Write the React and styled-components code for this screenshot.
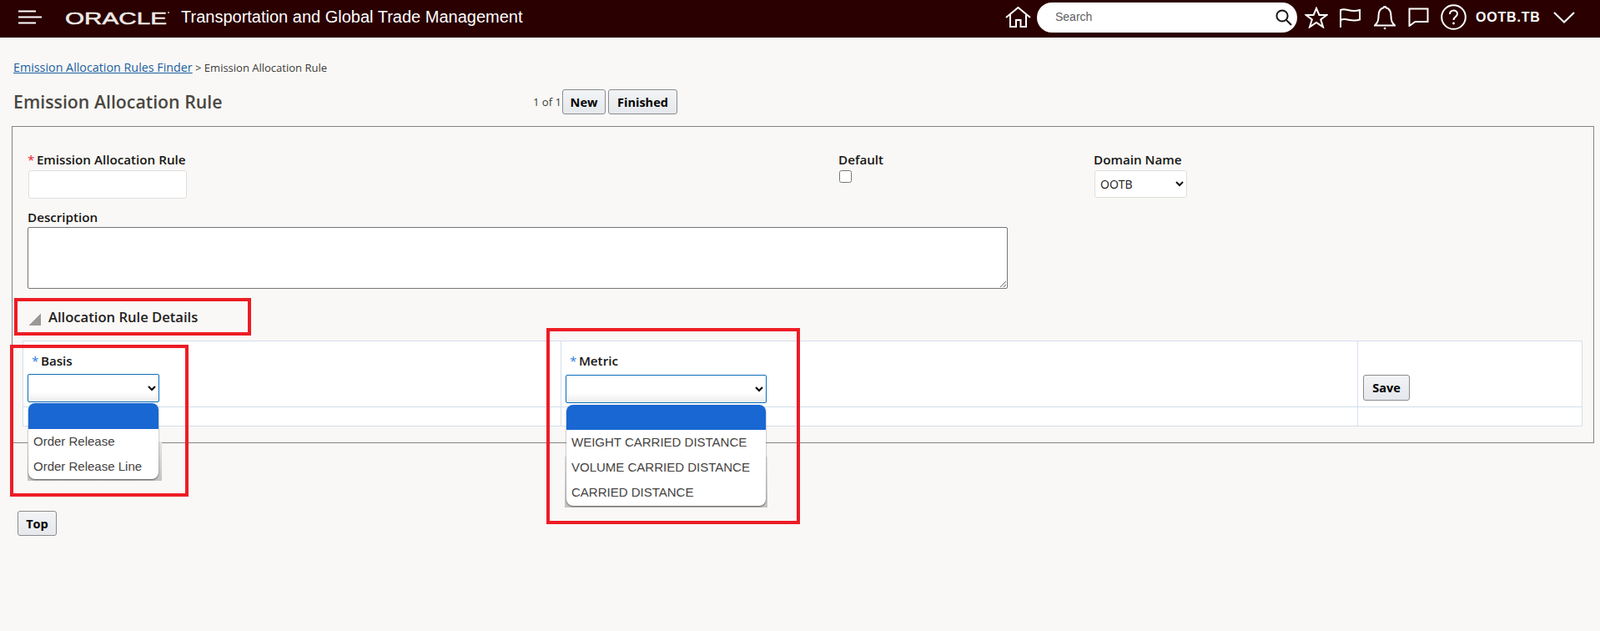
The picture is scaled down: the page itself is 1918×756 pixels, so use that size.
import React from 'react';
import styled, { createGlobalStyle } from 'styled-components';

const GlobalStyle = createGlobalStyle`
  html, body {
    margin: 0;
    padding: 0;
    background: #f9f8f6;
    font-family: "Open Sans", "Noto Sans", sans-serif;
    color: #161513;
  }
  * { box-sizing: border-box; }
`;

const Header = styled.header`
  height: 45px;
  background: #2a0000;
  display: flex;
  align-items: center;
  padding: 0 30px 4px 22px;
  color: #fff;
`;

const AppTitle = styled.div`
  margin-left: 11px;
  font-family: "Liberation Sans", Arial, sans-serif;
  font-size: 20px;
  white-space: nowrap;
`;

const HeaderRight = styled.div`
  margin-left: auto;
  display: flex;
  align-items: center;
`;

const HeaderIcon = styled.svg`
  display: block;
  flex: none;
  margin-left: ${(p) => p.$ml || 0}px;
  fill: none;
  stroke: #fff;
  stroke-width: 2;
`;

const LogoMark = styled.svg`
  display: block;
  flex: none;
  margin-left: 28px;
`;

const SearchPill = styled.div`
  margin-left: 7px;
  width: 312px;
  height: 36px;
  border-radius: 18px;
  background: #fff;
  display: flex;
  align-items: center;
  padding: 0 6px 0 22px;
`;

const SearchInput = styled.input`
  flex: 1;
  min-width: 0;
  height: 20px;
  margin-bottom: 2px;
  border: 0;
  outline: 0;
  padding: 0;
  background: transparent;
  font-family: "Liberation Sans", Arial, sans-serif;
  font-size: 14px;
  &::placeholder { color: #5f5f5f; opacity: 1; }
`;

const UserName = styled.div`
  margin-left: 11px;
  width: 79px;
  font-family: "Liberation Sans", Arial, sans-serif;
  font-weight: 700;
  font-size: 16px;
  letter-spacing: 0.8px;
  white-space: nowrap;
`;

const Main = styled.main`
  padding: 26px 7px 0 14px;
`;

const Breadcrumb = styled.div`
  padding-left: 2px;
  height: 20px;
  line-height: 20px;
  font-size: 13px;
  color: #3d3a37;
  white-space: nowrap;
`;

const CrumbLink = styled.a`
  color: #1b5f9e;
  text-decoration: underline;
  font-size: 14.3px;
`;

const TitleRow = styled.div`
  margin-top: 16px;
  height: 30px;
  padding-left: 2px;
  display: flex;
  align-items: center;
`;

const PageTitle = styled.h1`
  width: 623px;
  margin: 0 0 2px;
  font-size: 21.3px;
  font-weight: 600;
  color: #4a4742;
  white-space: nowrap;
`;

const Pager = styled.span`
  width: 35px;
  font-size: 13px;
  color: #3d3a37;
  white-space: nowrap;
`;

const Button = styled.button`
  height: ${(p) => p.$h || 30}px;
  width: ${(p) => p.$w}px;
  margin-left: ${(p) => p.$ml || 0}px;
  padding: 0;
  border: 1px solid #8c8c8c;
  border-radius: 3px;
  background: linear-gradient(#f2f4f6, #e5e8ec);
  font-family: "Open Sans", sans-serif;
  font-size: 14.5px;
  font-weight: 700;
  color: #000;
`;

const Panel = styled.section`
  margin-top: 14px;
  height: 380px;
  border: 1px solid #848484;
  padding: 31px 13px 18px 0;
`;

const TopFields = styled.div`
  padding-left: 18px;
  display: grid;
  grid-template-columns: 972px 306px auto;
`;

const Field = styled.div`
  display: flex;
  flex-direction: column;
  align-items: flex-start;
`;

const Label = styled.label`
  display: block;
  height: 20px;
  line-height: ${(p) => p.$lh || 17}px;
  font-size: 15.2px;
  font-weight: 600;
  color: #161513;
  white-space: nowrap;
`;

const Star = styled.span`
  color: ${(p) => (p.$blue ? '#2a7de1' : '#e8202a')};
  margin-right: 2.5px;
  font-weight: 400;
`;

const TextInput = styled.input`
  width: 190px;
  height: 34px;
  margin: 1px 0 0 1px;
  border: 1px solid #dedede;
  border-radius: 3px;
  background: #fff;
`;

const Checkbox = styled.input`
  width: 15px;
  height: 15px;
  margin: 1px 0 0 1px;
`;

const DomainSelect = styled.select`
  width: 111px;
  height: 33px;
  margin: 1px 0 0 1px;
  padding-left: 2px;
  border: 1px solid #dedede;
  border-radius: 3px;
  background: #fff;
  font-family: "Open Sans", sans-serif;
  font-size: 14px;
  color: #161513;
`;

const DescriptionField = styled.div`
  margin: 12px 0 0 18px;
`;

const DescriptionArea = styled.textarea`
  display: block;
  width: 1175px;
  height: 74px;
  margin-top: 2px;
  border: 1px solid #767676;
  border-radius: 2px;
  background: #fff;
`;

const SectionBox = styled.div`
  margin: 11px 0 0 2px;
  width: 284px;
  height: 45px;
  border: 4px solid #ed1c24;
  display: flex;
  align-items: center;
  padding-left: 14px;
`;

const SectionTriangle = styled.span`
  width: 14px;
  height: 14px;
  margin-top: 6px;
  background: linear-gradient(135deg, transparent 50%, #999 50%);
`;

const SectionTitle = styled.h2`
  margin: 0 0 0 9px;
  font-size: 16.6px;
  font-weight: 600;
  color: #24211e;
  white-space: nowrap;
`;

const DetailsTable = styled.div`
  margin: 6px 0 0 12px;
  height: 103px;
  display: grid;
  grid-template-columns: 644px 955px 1fr;
  grid-template-rows: 78px 1fr;
  border: 1px solid #d2dfea;
  background: #fff;
`;

const Cell = styled.div`
  position: relative;
  padding: ${(p) => p.$pad || '0'};
  border-left: ${(p) => (p.$first ? '0' : '1px solid #d2dfea')};
  border-top: ${(p) => (p.$lower ? '1px solid #d2dfea' : '0')};
`;

const CellLabel = styled(Label)`
  padding-left: 5px;
  margin-top: 14px;
`;

const SelectWrap = styled.div`
  position: relative;
  width: ${(p) => p.$w}px;
  margin-top: ${(p) => p.$mt || 0}px;
`;

const RuleSelect = styled.select`
  display: block;
  width: 100%;
  height: 34px;
  border: 1px solid #0a6ebd;
  border-radius: 2px;
  background: linear-gradient(#fff 65%, #ececec);
`;

const DropShade = styled.div`
  position: absolute;
  z-index: 3;
  left: ${(p) => p.$left}px;
  top: ${(p) => p.$top}px;
  width: ${(p) => p.$w}px;
  height: ${(p) => p.$h}px;
  padding: 0 ${(p) => p.$right}px 2px ${(p) => p.$pl}px;
  background: linear-gradient(transparent 50%, #e4e4e4 50%, #c4c4c4);
`;

const DropList = styled.ul`
  list-style: none;
  margin: 0;
  padding: 0;
  height: 100%;
  overflow: hidden;
  background: #fff;
  border-radius: 8px;
  box-shadow: 0 1px 2px rgba(0, 0, 0, 0.55);
`;

const DropOption = styled.li`
  height: ${(p) => p.$h || 30}px;
  line-height: 30px;
  padding-left: 6px;
  font-family: "Liberation Sans", Arial, sans-serif;
  font-size: 15px;
  color: #45423f;
  white-space: nowrap;
  background: ${(p) => (p.$selected ? '#1967d2' : 'transparent')};
`;

const Callout = styled.div`
  position: absolute;
  z-index: 4;
  left: ${(p) => p.$left}px;
  top: ${(p) => p.$top}px;
  width: ${(p) => p.$w}px;
  height: ${(p) => p.$h}px;
  border: 4px solid #ed1c24;
  pointer-events: none;
`;

const TopLink = styled.div`
  margin: 81px 0 0 7px;
`;

function Hamburger() {
  return (
    <HeaderIcon width="28" height="17" viewBox="0 0 28 17">
      <path d="M0 1.5h21M0 8.5h28M0 15.5h21" />
    </HeaderIcon>
  );
}

function OracleLogo() {
  return (
    <LogoMark width="128" height="26" viewBox="0 0 128 26">
      <text
        x="0"
        y="20.5"
        fill="#eee9e6"
        stroke="#eee9e6"
        strokeWidth="0.5"
        fontFamily="Liberation Sans, Arial, sans-serif"
        fontSize="21"
        textLength="122"
        lengthAdjust="spacingAndGlyphs"
      >
        ORACLE
      </text>
      <circle cx="124" cy="7" r="1" fill="#c9c4c2" />
    </LogoMark>
  );
}

function Dropdown({ top, left, width, height, right, paddingLeft, blue, options }) {
  return (
    <DropShade $top={top} $left={left} $w={width} $h={height} $right={right} $pl={paddingLeft}>
      <DropList>
        <DropOption $selected $h={blue} />
        {options.map((o) => (
          <DropOption key={o}>{o}</DropOption>
        ))}
      </DropList>
    </DropShade>
  );
}

export default function App() {
  return (
    <>
      <GlobalStyle />
      <Header>
        <Hamburger />
        <OracleLogo />
        <AppTitle>Transportation and Global Trade Management</AppTitle>
        <HeaderRight>
          <HeaderIcon width="31" height="25" viewBox="0 0 31 25">
            <path d="M1 13 15.5 1 30 13M6 9.5V24h7v-8h5.5v8H25V9.5" />
          </HeaderIcon>
          <SearchPill>
            <SearchInput placeholder="Search" />
            <HeaderIcon width="20" height="20" viewBox="0 0 20 20" style={{ stroke: '#161513' }}>
              <circle cx="8" cy="8" r="6.6" />
              <path d="m13 13 6 6" />
            </HeaderIcon>
          </SearchPill>
          <HeaderIcon $ml={9} width="28" height="26" viewBox="0 0 28 26">
            <path d="m14 2 3.4 8h9l-7.2 5.4 2.8 9L14 19l-8 5.4 2.8-9L1.6 10h9z" />
          </HeaderIcon>
          <HeaderIcon $ml={14} width="25" height="24" viewBox="0 0 25 24">
            <path d="M1 24V3c7-3 11 3.500 23 0v11.500C13 18 8 11.500 1 15" />
          </HeaderIcon>
          <HeaderIcon $ml={16} width="26" height="30" viewBox="0 0 26 30">
            <path d="M1 24.500c3-3 4.500-5 4.500-11C5.500 7 8.500 4 11.500 3.300 11.500 1.500 14.500 1.500 14.500 3.300 17.500 4 20.500 7 20.500 13.500c0 6 1.500 8 4.500 11z" />
            <circle cx="13" cy="28" r="1.300" fill="#fff" stroke="none" />
          </HeaderIcon>
          <HeaderIcon $ml={15} width="25" height="23" viewBox="0 0 25 23">
            <path d="M1.500 1.500h22v15.500H8.500l-7 5z" />
          </HeaderIcon>
          <HeaderIcon $ml={14} width="31" height="31" viewBox="0 0 31 31">
            <circle cx="15.500" cy="15.500" r="14.300" />
            <path d="M11 12c0-6 9-6 9-.5 0 3.500-4.500 3.500-4.500 7.500" />
            <circle cx="15.500" cy="23" r="1.400" fill="#fff" stroke="none" />
          </HeaderIcon>
          <UserName>OOTB.TB</UserName>
          <HeaderIcon $ml={14} width="26" height="14" viewBox="0 0 26 14">
            <path d="m1 1 12 11.500L25 1" />
          </HeaderIcon>
        </HeaderRight>
      </Header>

      <Main>
        <Breadcrumb>
          <CrumbLink href="#">Emission Allocation Rules Finder</CrumbLink> &gt; Emission Allocation Rule
        </Breadcrumb>
        <TitleRow>
          <PageTitle>Emission Allocation Rule</PageTitle>
          <Pager>1 of 1</Pager>
          <Button $w={52}>New</Button>
          <Button $w={83} $ml={3}>Finished</Button>
        </TitleRow>

        <Panel>
          <TopFields>
            <Field>
              <Label><Star>*</Star>Emission Allocation Rule</Label>
              <TextInput />
            </Field>
            <Field>
              <Label>Default</Label>
              <Checkbox type="checkbox" />
            </Field>
            <Field>
              <Label>Domain Name</Label>
              <DomainSelect defaultValue="OOTB">
                <option>OOTB</option>
              </DomainSelect>
            </Field>
          </TopFields>
          <DescriptionField>
            <Label $lh={21}>Description</Label>
            <DescriptionArea />
          </DescriptionField>

          <SectionBox>
            <SectionTriangle />
            <SectionTitle>Allocation Rule Details</SectionTitle>
          </SectionBox>

          <DetailsTable>
            <Cell $first $pad="0 0 0 5px">
              <CellLabel as="label" $lh={19}><Star $blue>*</Star>Basis</CellLabel>
              <SelectWrap $w={158} $mt={5}>
                <RuleSelect />
                <Dropdown
                  top={35}
                  left={0}
                  width={161}
                  height={93}
                  right={4}
                  paddingLeft={1}
                  blue={31}
                  options={['Order Release', 'Order Release Line']}
                />
              </SelectWrap>
              <Callout $left={-16} $top={4} $w={214} $h={182} />
            </Cell>
            <Cell $pad="0 0 0 5px">
              <CellLabel as="label" $lh={19}><Star $blue>*</Star>Metric</CellLabel>
              <SelectWrap $w={241} $mt={6}>
                <RuleSelect />
                <Dropdown
                  top={36}
                  left={-1}
                  width={243}
                  height={123}
                  right={2}
                  paddingLeft={2}
                  blue={30}
                  options={['WEIGHT CARRIED DISTANCE', 'VOLUME CARRIED DISTANCE', 'CARRIED DISTANCE']}
                />
              </SelectWrap>
              <Callout $left={-18} $top={-16} $w={304} $h={235} />
            </Cell>
            <Cell $pad="40px 0 0 6px">
              <Button $w={56} $h={31}>Save</Button>
            </Cell>
            <Cell $first $lower />
            <Cell $lower />
            <Cell $lower />
          </DetailsTable>
        </Panel>

        <TopLink>
          <Button $w={47}>Top</Button>
        </TopLink>
      </Main>
    </>
  );
}
